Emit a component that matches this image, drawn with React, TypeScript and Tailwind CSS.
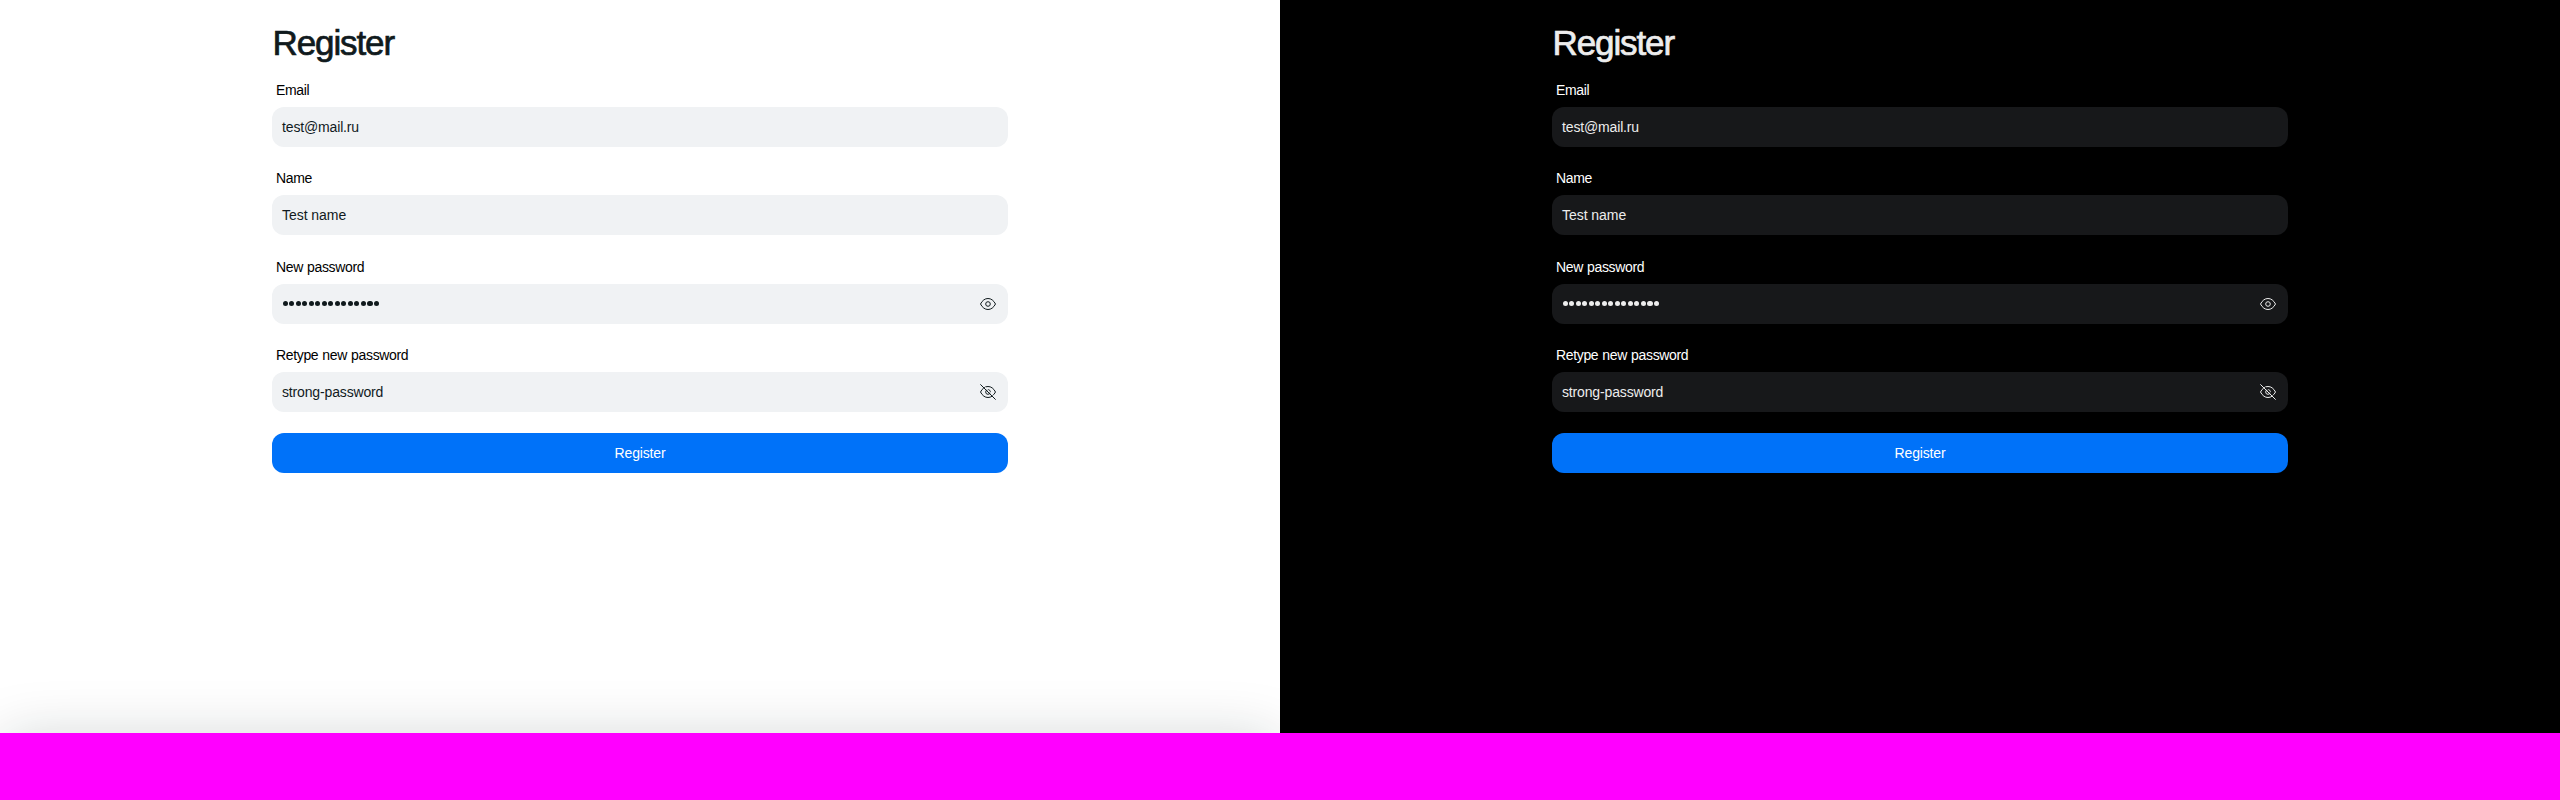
import { clsx } from "clsx";

type FieldProps = {
  label: string;
  value: string;
  tracking?: string;
  dark: boolean;
  icon?: "shown" | "hidden";
};

function Eye({ crossed, dark }: { crossed: boolean; dark: boolean }) {
  return (
    <svg width="16" height="16" viewBox="0 0 16 16" fill="none" stroke="currentColor" strokeWidth="1">
      <path d="M.5 8C2.400 4.400 4.900 2.500 8 2.500S13.600 4.400 15.500 8C13.600 11.600 11.100 13.500 8 13.500S2.400 11.600.5 8Z" />
      <circle cx="8" cy="8" r="2.300" />
      {crossed && (
        <>
          <path d="M1.400-.4l15 15" stroke={dark ? "#17181a" : "#f0f2f4"} />
          <path d="M.35.35l15.300 15.300" />
        </>
      )}
    </svg>
  );
}

function Field({ label, value, tracking, dark, icon }: FieldProps) {
  return (
    <div className="flex flex-col">
      <div
        className={clsx(
          "h-5 pl-1 text-sm leading-[21px] tracking-[-0.34px] whitespace-nowrap [word-spacing:0.5px]",
          dark ? "text-white" : "text-black",
        )}
      >
        {label}
      </div>
      <div
        className={clsx(
          "mt-[7px] flex h-10 items-center justify-between rounded-xl px-2.5 text-sm",
          dark ? "bg-[#17181a] text-[#ededed]" : "bg-[#f0f2f4] text-[#101a1d]",
        )}
      >
        {icon === "shown" ? (
          <div className="flex gap-[1.230px] pl-[0.5px]" aria-label="password">
            {Array.from(value, (_, i) => (
              <span key={i} className="size-[5.3px] rounded-full bg-current" />
            ))}
          </div>
        ) : (
          <span className={clsx("leading-5 whitespace-nowrap", tracking)}>{value}</span>
        )}
        {icon && (
          <span className="mr-0.5">
            <Eye crossed={icon === "hidden"} dark={dark} />
          </span>
        )}
      </div>
    </div>
  );
}

function Panel({ dark }: { dark: boolean }) {
  return (
    <section className={clsx("relative h-[733px] w-[1280px] overflow-hidden", dark ? "bg-black" : "bg-white")}>
      <div className="mx-auto w-[736px] pt-5">
        <h1
          className={clsx(
            "h-[60px] pl-[0.5px] text-[35px] leading-[46px] font-normal tracking-[-1.100px] [-webkit-text-stroke:0.7px_currentColor]",
            dark ? "text-[#ededed]" : "text-[#101a1d]",
          )}
        >
          Register
        </h1>
        <div className="flex flex-col gap-[21.400px]">
          <Field dark={dark} label="Email" value="test@mail.ru" tracking="tracking-[-0.15px]" />
          <Field dark={dark} label="Name" value="Test name" tracking="tracking-[-0.05px]" />
          <Field dark={dark} label="New password" value="strong-password" icon="shown" />
          <Field
            dark={dark}
            label="Retype new password"
            value="strong-password"
            tracking="tracking-[-0.15px]"
            icon="hidden"
          />
        </div>
        <button className="mt-[21px] block h-10 w-full rounded-xl bg-[#0072f9] text-sm tracking-[-0.15px] text-white">
          Register
        </button>
      </div>
      {!dark && (
        <div className="absolute top-full left-0 h-16 w-full shadow-[0_4px_60px_-4px_rgba(16,26,29,0.21)]" />
      )}
    </section>
  );
}

export default function App() {
  return (
    <main className="h-[800px] w-[2560px] overflow-hidden bg-[#ff00ff] font-['Liberation_Sans',Arial,sans-serif]">
      <div className="flex">
        <Panel dark={false} />
        <Panel dark />
      </div>
    </main>
  );
}
